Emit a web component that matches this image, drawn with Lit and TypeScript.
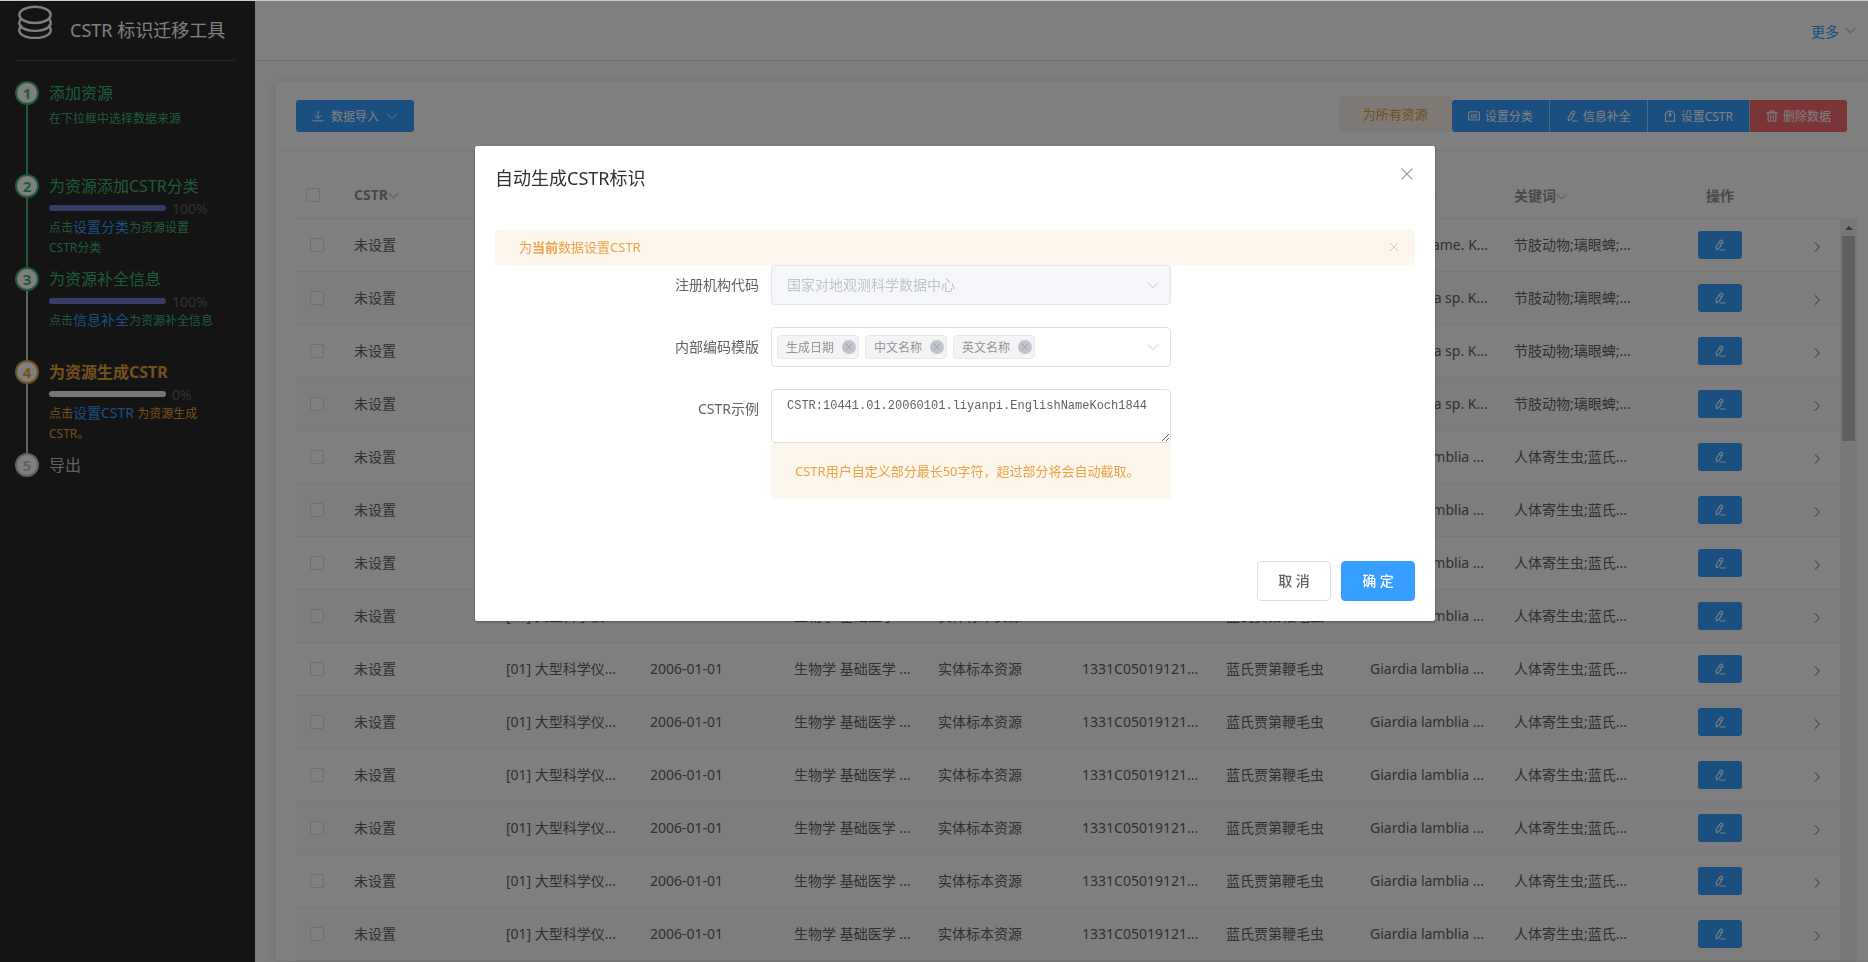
import { LitElement, html, css, svg, nothing } from "lit";
import { customElement, state } from "lit/decorators.js";
import { classMap } from "lit/directives/class-map.js";

const glyphs = {
  database: svg`<g stroke-width="7"><ellipse cx="50" cy="29" rx="46" ry="24"/><path d="M9 40C-8 62 18 76 50 76s58-14 41-36"/><path d="M9 61C-8 83 18 97 50 97s58-14 41-36"/></g>`,
  down: svg`<path stroke-width="8" d="M10 32l40 40 40-40"/>`,
  right: svg`<path stroke-width="8" d="M44 14l34 36-34 36"/>`,
  close: svg`<path stroke-width="8" d="M14 14l72 72M86 14L14 86"/>`,
  download: svg`<path stroke-width="8" d="M50 10v58M24 44l26 26 26-26M8 90h84"/>`,
  category: svg`<rect stroke-width="9" x="6" y="14" width="88" height="70" rx="8"/><path stroke-width="9" d="M32 34v32M50 34v32M68 34v32"/>`,
  edit: svg`<path stroke-width="9" d="M54 10q8-4 16 4 6 6 2 14L44 76l-24 14-2-26zM42 26l22 14M50 92h44"/>`,
  badge: svg`<path stroke-width="9" d="M12 94V34q0-4 4-8l18-14q16-8 32 0l18 14q4 4 4 8v60zM50 12v26"/><circle stroke-width="9" cx="50" cy="42" r="9"/>`,
  trash: svg`<path stroke-width="9" d="M6 24h88M34 22V8h32v14M18 24v68h64V24M40 42v32M60 42v32"/>`,
};

const icon = (name: keyof typeof glyphs, cls = "") =>
  html`<svg class="icon ${cls}" viewBox="0 0 100 100" aria-hidden="true">${glyphs[name]}</svg>`;

interface Step {
  status: "done" | "active" | "wait";
  title: string;
  percent?: number;
  before?: string;
  link?: string;
  after?: string;
}

const steps: Step[] = [
  { status: "done", title: "添加资源", before: "在下拉框中选择数据来源" },
  { status: "done", title: "为资源添加CSTR分类", percent: 100, before: "点击", link: "设置分类", after: "为资源设置CSTR分类" },
  { status: "done", title: "为资源补全信息", percent: 100, before: "点击", link: "信息补全", after: "为资源补全信息" },
  { status: "active", title: "为资源生成CSTR", percent: 0, before: "点击", link: "设置CSTR", after: " 为资源生成CSTR。" },
  { status: "wait", title: "导出" },
];

const columns = ["CSTR", "资源类型", "生成日期", "学科分类", "资源形式", "资源编号", "中文名称", "英文名称", "关键词"];

const row = (cn: string, en: string, keys: string) => [
  "未设置", "[01] 大型科学仪...", "2006-01-01", "生物学 基础医学 ...",
  "实体标本资源", "1331C05019121...", cn, en, keys,
];

const tickKeys = "节肢动物;璃眼蜱;...";
const rows = [
  row("璃眼蜱", "English Name. K...", tickKeys),
  ...Array.from({ length: 3 }, () => row("璃眼蜱", "Hyalomma sp. K...", tickKeys)),
  ...Array.from({ length: 10 }, () => row("蓝氏贾第鞭毛虫", "Giardia lamblia ...", "人体寄生虫;蓝氏...")),
];

const shared = css`
  * { box-sizing: border-box; }
  .icon { width: 12px; height: 12px; flex: none; fill: none; stroke: currentColor; stroke-linejoin: round; stroke-linecap: round; }
  button { font: inherit; margin: 0; padding: 0; border: 0; background: none; color: inherit; cursor: pointer; }
  a { color: #369eff; text-decoration: none; }
`;

@customElement("step-panel")
export class StepPanel extends LitElement {
  static styles = [shared, css`
    :host { display: block; flex: none; width: 255px; padding: 0 20px 0 15px; background: #282828; }
    .brand { display: flex; align-items: center; gap: 18px; height: 60px; padding: 0 0 4px 3px; border-bottom: 1px solid #555; color: #fff; }
    .logo { width: 34px; height: 34px; align-self: flex-start; margin-top: 4px; }
    h1 { margin: 0; font-size: 18px; font-weight: 400; white-space: nowrap; }
    ol { list-style: none; margin: 20px 0 0; padding: 0; }
    li { display: flex; gap: 10px; min-height: 93px; color: #c0c4cc; }
    .done { color: #42b476; }
    .active { color: #e6a23c; }
    .rail { display: flex; flex-direction: column; align-items: center; width: 24px; }
    .num { width: 24px; height: 24px; border: 2px solid; border-radius: 50%; background: #fff; font-size: 15px; font-weight: 700; line-height: 20px; text-align: center; }
    .line { flex: 1; width: 2px; background: #c0c4cc; }
    .line.filled { background: #42b476; }
    .body { flex: 1; padding-right: 20px; }
    h2 { margin: 0; font-size: 16px; font-weight: 400; line-height: 24px; white-space: nowrap; }
    .active h2 { font-weight: 700; }
    p { margin: 0; font-size: 12px; line-height: 20px; }
    p a { font-size: 14px; line-height: 16px; }
    .plain { margin-top: 4px; }
    .progress { display: flex; align-items: center; gap: 6px; height: 20px; margin-right: -20px; font-size: 14px; color: #606266; }
    .track { width: 117px; height: 6px; border-radius: 3px; background: #ebeef5; overflow: hidden; }
    .fill { height: 100%; background: #6f7ad3; }
  `];

  render() {
    return html`
      <div class="brand">${icon("database", "logo")}<h1>CSTR 标识迁移工具</h1></div>
      <ol>
        ${steps.map((s, i) => html`
          <li class=${s.status}>
            <div class="rail">
              <span class="num">${i + 1}</span>
              ${i < steps.length - 1
                ? html`<span class=${classMap({ line: true, filled: steps[i + 1].status === "done" })}></span>`
                : nothing}
            </div>
            <div class="body">
              <h2>${s.title}</h2>
              ${s.percent === undefined ? nothing : html`
                <div class="progress">
                  <div class="track"><div class="fill" style="width:${s.percent}%"></div></div>
                  <span>${s.percent}%</span>
                </div>`}
              ${s.before
                ? html`<p class=${s.percent === undefined ? "plain" : ""}>${s.before}${s.link ? html`<a href="#">${s.link}</a>` : nothing}${s.after}</p>`
                : nothing}
            </div>
          </li>`)}
      </ol>`;
  }
}

@customElement("resource-table")
export class ResourceTable extends LitElement {
  static styles = [shared, css`
    :host { display: flex; padding: 20px 11px 0 20px; }
    .scroll { flex: 1; min-width: 0; }
    table { width: 100%; table-layout: fixed; border-collapse: separate; border-spacing: 0; font-size: 14px; color: #606266; }
    .c-check, .c-expand { width: 48px; }
    .c-first { width: 152px; }
    th, td { padding: 0 10px; border-bottom: 1px solid #ebeef5; text-align: left; white-space: nowrap; overflow: hidden; text-overflow: ellipsis; }
    th { height: 48px; color: #909399; font-weight: 700; }
    td { height: 53px; padding-bottom: 2px; }
    tbody tr:nth-child(even) td { background: #fafafa; }
    td.check { padding: 0 0 0 14px; }
    th.center, td.center { text-align: center; }
    td.center { padding-bottom: 0; }
    input { display: block; appearance: none; width: 14px; height: 14px; margin: 0; border: 1px solid #dcdfe6; border-radius: 2px; background: #fff; }
    th .icon { width: 11px; height: 11px; vertical-align: -1px; }
    .edit { display: inline-flex; align-items: center; justify-content: center; width: 44px; height: 28px; border-radius: 3px; background: #369eff; color: #fff; vertical-align: middle; }
    .expand { display: inline-flex; vertical-align: middle; }
    .bar { flex: none; display: flex; flex-direction: column; align-items: center; width: 17px; margin-top: 48px; background: #f1f1f1; }
    .up { margin: 7px 0 6px; border: 4px solid transparent; border-top: 0; border-bottom-color: #777; }
    .thumb { width: 13px; height: 205px; background: #c1c1c1; }
  `];

  render() {
    return html`
      <div class="scroll">
        <table>
          <colgroup>
            <col class="c-check"><col class="c-first">
            ${columns.slice(1).map(() => html`<col>`)}
            <col><col class="c-expand">
          </colgroup>
          <thead>
            <tr>
              <th><input type="checkbox" aria-label="全选"></th>
              ${columns.map((c) => html`<th>${c}${icon("down")}</th>`)}
              <th class="center">操作</th>
              <th></th>
            </tr>
          </thead>
          <tbody>
            ${rows.map((r) => html`
              <tr>
                <td class="check"><input type="checkbox" aria-label="选择"></td>
                ${r.map((cell) => html`<td>${cell}</td>`)}
                <td class="center"><button class="edit" aria-label="编辑">${icon("edit")}</button></td>
                <td class="center"><button class="expand" aria-label="展开">${icon("right")}</button></td>
              </tr>`)}
          </tbody>
        </table>
      </div>
      <div class="bar" aria-hidden="true"><span class="up"></span><span class="thumb"></span></div>`;
  }
}

@customElement("cstr-dialog")
export class CstrDialog extends LitElement {
  @state() private tags = ["生成日期", "中文名称", "英文名称"];

  static styles = [shared, css`
    :host { display: block; width: 960px; padding: 20px; border-radius: 2px; background: #fff; box-shadow: 0 1px 3px rgba(0, 0, 0, 0.3); color: #606266; font-size: 14px; }
    header { display: flex; justify-content: space-between; align-items: flex-start; height: 64px; }
    h2 { margin: 0; color: #303133; font-size: 18px; font-weight: 400; line-height: 24px; }
    .x { display: flex; color: #909399; }
    header .x { margin: 1px 1px 0 0; }
    header .icon { width: 14px; height: 14px; }
    .notice { display: flex; align-items: center; justify-content: space-between; padding: 0 16px 2px 24px; border-radius: 4px; background: #fdf6ec; color: #eda045; font-size: 13px; }
    .notice.top { height: 35px; }
    .notice.top .icon { width: 10px; height: 10px; color: #c0c4cc; }
    .notice.hint { height: 56px; white-space: nowrap; }
    form { display: grid; grid-template-columns: 30% 400px; row-gap: 22px; }
    label { padding-right: 12px; line-height: 40px; text-align: right; }
    .box { display: grid; grid-template-columns: minmax(0, 1fr); align-items: center; height: 40px; }
    .box > * { grid-area: 1 / 1; }
    .box > .icon { justify-self: end; margin-right: 12px; color: #c0c4cc; pointer-events: none; }
    select { appearance: none; width: 100%; height: 40px; padding: 0 15px 2px; border: 1px solid #e4e7ed; border-radius: 4px; background: #f5f7fa; color: #c0c4cc; font: inherit; opacity: 1; }
    .multi { display: flex; align-items: center; gap: 6px; height: 40px; padding: 0 30px 0 5px; border: 1px solid #dcdfe6; border-radius: 4px; }
    .tag { display: flex; flex: none; align-items: center; justify-content: space-between; width: 82px; height: 24px; padding: 0 2px 0 8px; border: 1px solid #e9e9eb; border-radius: 4px; background: #f4f4f5; color: #909399; font-size: 12px; }
    .tag button { display: flex; align-items: center; justify-content: center; width: 14px; height: 14px; border-radius: 50%; background: #c0c4cc; color: #909399; }
    .tag .icon { width: 8px; height: 8px; }
    .multi input { flex: 1; min-width: 0; border: 0; outline: 0; background: none; font: inherit; }
    textarea { display: block; width: 100%; height: 54px; padding: 6px 15px; border: 1px solid #dcdfe6; border-radius: 4px; color: #606266; font: 12px/21px "Liberation Mono", monospace; resize: vertical; }
    footer { display: flex; justify-content: flex-end; gap: 10px; margin-top: 62px; }
    footer button { width: 74px; height: 40px; padding-bottom: 2px; border: 1px solid #dcdfe6; border-radius: 4px; font-weight: 500; }
    footer .primary { border-color: #369eff; background: #369eff; color: #fff; }
  `];

  private remove(tag: string) {
    this.tags = this.tags.filter((t) => t !== tag);
  }

  render() {
    return html`
      <header><h2>自动生成CSTR标识</h2><button class="x" aria-label="关闭">${icon("close")}</button></header>
      <div class="notice top">
        <span>为<b>当前</b>数据设置CSTR</span>
        <button class="x" aria-label="关闭提示">${icon("close")}</button>
      </div>
      <form @submit=${(e: Event) => e.preventDefault()}>
        <label for="org">注册机构代码</label>
        <div class="box">
          <select id="org" disabled><option>国家对地观测科学数据中心</option></select>
          ${icon("down")}
        </div>
        <label for="tpl">内部编码模版</label>
        <div class="box">
          <div class="multi">
            ${this.tags.map((t) => html`
              <span class="tag">${t}<button type="button" aria-label="移除${t}" @click=${() => this.remove(t)}>${icon("close")}</button></span>`)}
            <input id="tpl" type="text">
          </div>
          ${icon("down")}
        </div>
        <label for="sample">CSTR示例</label>
        <div>
          <textarea id="sample" spellcheck="false" .value=${"CSTR:10441.01.20060101.liyanpi.EnglishNameKoch1844"}></textarea>
          <div class="notice hint">CSTR用户自定义部分最长50字符，超过部分将会自动截取。</div>
        </div>
      </form>
      <footer><button>取 消</button><button class="primary">确 定</button></footer>`;
  }
}

@customElement("app-root")
export class AppRoot extends LitElement {
  static styles = [shared, css`
    :host { display: flex; height: 100vh; overflow: hidden; border-top: 1px solid #c8d0cc; box-sizing: border-box; background: #fafafa; color: #606266; font-family: "Noto Sans", "Noto Sans CJK SC", sans-serif; font-size: 14px; }
    main { flex: 1; min-width: 0; }
    .topbar { display: flex; justify-content: flex-end; align-items: center; height: 60px; padding-right: 12px; border-bottom: 1px solid #e6e6e6; background: #fff; }
    .topbar a { display: flex; align-items: center; gap: 6px; font-size: 14px; }
    .topbar .icon { width: 11px; height: 11px; }
    .card { margin: 21px 0 0 21px; border-radius: 4px 0 0 0; background: #fff; box-shadow: 0 2px 12px rgba(0, 0, 0, 0.1); }
    .tools { display: flex; justify-content: space-between; align-items: center; height: 69px; padding: 0 21px 0 20px; border-bottom: 1px solid #ebeef5; }
    .btn { display: inline-flex; align-items: center; justify-content: center; gap: 5px; height: 32px; padding: 0 16px; background: #369eff; color: #fff; font-size: 12px; white-space: nowrap; }
    .import { gap: 7px; border-radius: 3px; }
    .group { display: flex; align-items: flex-end; margin-bottom: 4px; }
    .group .btn + .btn { border-left: 1px solid #9bcfff; }
    .group .btn:first-of-type { border-radius: 3px 0 0 3px; }
    .group .danger { border-radius: 0 3px 3px 0; background: #f56c6c; }
    .scope { padding: 0 24px; border-radius: 4px; background: #fdf3ea; color: #e6a23c; font-size: 13px; line-height: 36px; }
    .mask { position: fixed; inset: 1px 0 0 0; display: flex; justify-content: center; align-items: flex-start; padding: 145px 0 0 42px; background: rgba(0, 0, 0, 0.5); }
  `];

  render() {
    return html`
      <step-panel></step-panel>
      <main>
        <div class="topbar"><a href="#">更多${icon("down")}</a></div>
        <section class="card">
          <div class="tools">
            <button class="btn import">${icon("download")}数据导入${icon("down")}</button>
            <div class="group">
              <span class="scope">为所有资源</span>
              <button class="btn">${icon("category")}设置分类</button>
              <button class="btn">${icon("edit")}信息补全</button>
              <button class="btn">${icon("badge")}设置CSTR</button>
              <button class="btn danger">${icon("trash")}删除数据</button>
            </div>
          </div>
          <resource-table></resource-table>
        </section>
      </main>
      <div class="mask"><cstr-dialog role="dialog" aria-modal="true" aria-label="自动生成CSTR标识"></cstr-dialog></div>`;
  }
}
